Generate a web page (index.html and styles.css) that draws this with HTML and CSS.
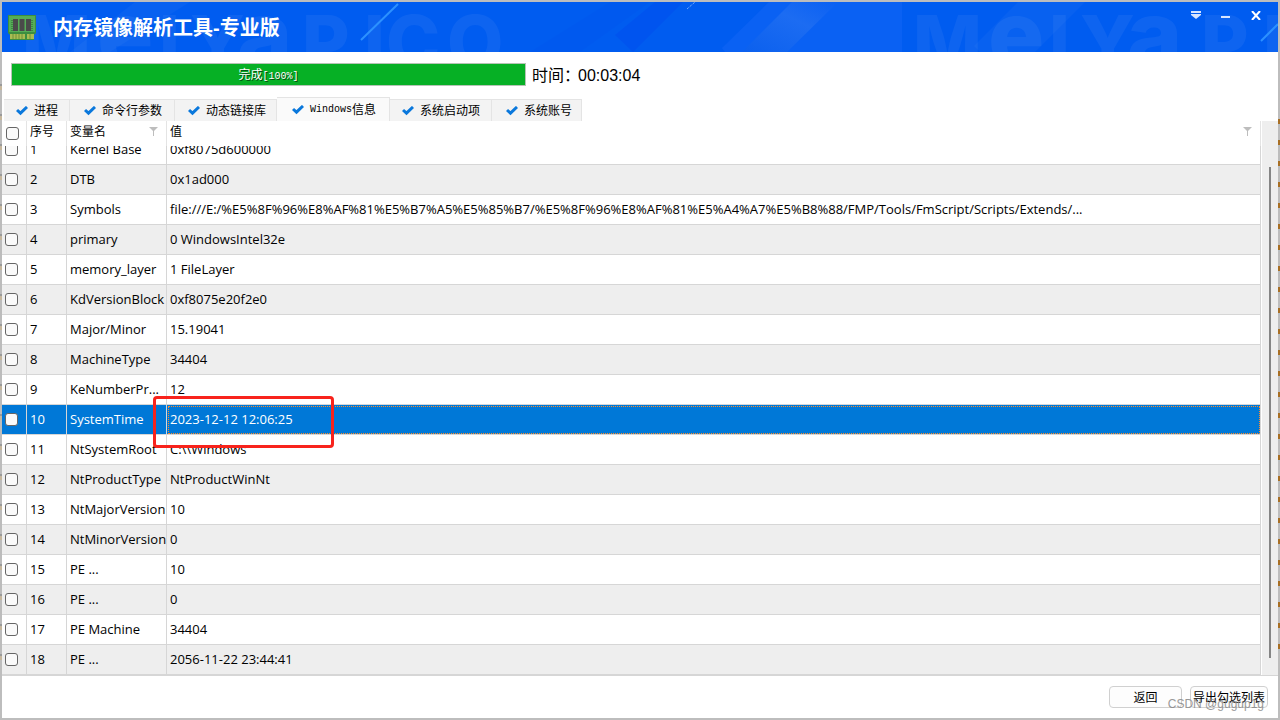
FILE: index.html
```html
<!DOCTYPE html>
<html lang="zh-CN">
<head>
<meta charset="utf-8">
<title>内存镜像解析工具-专业版</title>
<link rel="stylesheet" href="styles.css">
</head>
<body>
<svg class="symbols" aria-hidden="true">
  <symbol id="check" viewBox="0 0 12 10"><path d="M1 4 L4.500 7.200 L11 1" fill="none" stroke="#0a78dc" stroke-width="3"/></symbol>
  <symbol id="filter" viewBox="0 0 9 9"><path d="M0 0H9L5 4V9H4V4Z" fill="#bdbdbd"/></symbol>
</svg>
<div class="window">
  <header class="titlebar">
    <svg class="pattern" viewBox="2 2 1276 50" preserveAspectRatio="xMinYMin slice" aria-hidden="true">
      <defs><linearGradient id="beam" x1="0" y1="1" x2="1" y2="0"><stop offset="0" stop-color="#0b60ee"/><stop offset=".6" stop-color="#1c6cf2"/><stop offset="1" stop-color="#0a60f3"/></linearGradient></defs>
      <path d="M135 2H190L110 52H70Z" fill="#fff" opacity=".03"/>
      <path d="M545 2H650L580 52H530L610 2Z" fill="#0050ec" opacity=".2"/>
      <path d="M655 2H683L633 52L615 35Z" fill="#0048ee" opacity=".4"/>
      <path d="M769 2H902V52H725L722 48Z" fill="#0a61f3"/>
      <path d="M792 2H838L787 52H742Z" fill="url(#beam)"/>
      <path d="M1018 2H1085L1035 52H980L974 46Z" fill="#fff" opacity=".03"/>
      <text class="brand" y="68"><tspan x="22">M</tspan><tspan class="round" x="97">e</tspan><tspan x="159">I</tspan><tspan x="190">Y</tspan><tspan class="round" x="237">a</tspan><tspan x="302">P</tspan><tspan x="364">I</tspan><tspan x="386">C</tspan><tspan x="447">O</tspan></text>
      <text class="brand" y="68"><tspan x="913">M</tspan><tspan class="round" x="988">e</tspan><tspan x="1049">I</tspan><tspan x="1080">Y</tspan><tspan class="round" x="1127">a</tspan><tspan x="1201">P</tspan><tspan x="1263">I</tspan></text>
      <path d="M361 40L398 4" stroke="#2c91ff" stroke-width="2"/>
      <path d="M687 9L695 2" stroke="#9cc8ff" stroke-dasharray="1 1"/>
      <path d="M1261 41L1278 24" stroke="#2c91ff" stroke-width="2"/>
    </svg>
    <svg class="logo" viewBox="0 0 28 26" aria-hidden="true">
      <path d="M0 0H28V18L26 20V25H2V20L0 18Z" fill="#3c8f40"/>
      <path d="M1 1H27V17H1Z" fill="#55ad57"/>
      <path d="M2 19H17V24H2ZM19 19H26V24H19Z" fill="#a9bd52"/>
      <path d="M5 19V24M8 19V24M11 19V24M14 19V24M22 19V24" stroke="#71903a"/>
      <path d="M5 4H10V16H5ZM11.500 4H16.500V16H11.500ZM18 4H23V16H18Z" fill="#4a4a4a"/>
      <path d="M4 5V16M24 5V16" stroke="#2d6130" stroke-dasharray="1 1"/>
    </svg>
    <h1>内存镜像解析工具-专业版</h1>
    <div class="controls">
      <button aria-label="菜单"><svg width="10" height="9" viewBox="0 0 10 9"><path d="M0 0H10V2H0ZM0 3H10V4L5 8L0 4Z" fill="#d7e5ff"/></svg></button>
      <button aria-label="最小化"><svg width="10" height="9" viewBox="0 0 10 9"><path d="M0 5H9V7H0Z" fill="#d7e5ff"/></svg></button>
      <button aria-label="关闭"><svg width="10" height="9" viewBox="0 0 10 9"><path d="M1 0L9 9M9 0L1 9" stroke="#fff" stroke-width="2"/></svg></button>
    </div>
  </header>
  <section class="status">
    <div class="progress" role="progressbar" aria-valuenow="100">完成<span class="mono">[100%]</span></div>
    <div class="elapsed">时间：<span>00:03:04</span></div>
  </section>
  <nav class="tabs" role="tablist">
    <button role="tab"><svg><use href="#check"/></svg>进程</button>
    <button role="tab"><svg><use href="#check"/></svg>命令行参数</button>
    <button role="tab"><svg><use href="#check"/></svg>动态链接库</button>
    <button role="tab" class="active" aria-selected="true"><svg><use href="#check"/></svg><span class="mono">Windows</span>信息</button>
    <button role="tab"><svg><use href="#check"/></svg>系统启动项</button>
    <button role="tab"><svg><use href="#check"/></svg>系统账号</button>
  </nav>
  <main class="viewer">
    <table>
      <colgroup><col class="c-check"><col class="c-num"><col class="c-name"><col></colgroup>
      <thead><tr>
        <th><input type="checkbox" aria-label="全选"></th><th>序号</th>
        <th><div class="head">变量名<svg><use href="#filter"/></svg></div></th>
        <th><div class="head last">值<svg><use href="#filter"/></svg></div></th>
      </tr></thead>
      <tbody>
        <tr class="partial"><td><div><input type="checkbox" aria-label="1"></div></td><td><div>1</div></td><td><div>Kernel Base</div></td><td><div>0xf8075d600000</div></td></tr>
        <tr><td><input type="checkbox" aria-label="2"></td><td>2</td><td>DTB</td><td>0x1ad000</td></tr>
        <tr><td><input type="checkbox" aria-label="3"></td><td>3</td><td>Symbols</td><td>file:///E:/%E5%8F%96%E8%AF%81%E5%B7%A5%E5%85%B7/%E5%8F%96%E8%AF%81%E5%A4%A7%E5%B8%88/FMP/Tools/FmScript/Scripts/Extends/...</td></tr>
        <tr><td><input type="checkbox" aria-label="4"></td><td>4</td><td>primary</td><td>0 WindowsIntel32e</td></tr>
        <tr><td><input type="checkbox" aria-label="5"></td><td>5</td><td>memory_layer</td><td>1 FileLayer</td></tr>
        <tr><td><input type="checkbox" aria-label="6"></td><td>6</td><td>KdVersionBlock</td><td>0xf8075e20f2e0</td></tr>
        <tr><td><input type="checkbox" aria-label="7"></td><td>7</td><td>Major/Minor</td><td>15.19041</td></tr>
        <tr><td><input type="checkbox" aria-label="8"></td><td>8</td><td>MachineType</td><td>34404</td></tr>
        <tr><td><input type="checkbox" aria-label="9"></td><td>9</td><td>KeNumberPr...</td><td>12</td></tr>
        <tr class="selected"><td><input type="checkbox" aria-label="10"></td><td>10</td><td>SystemTime</td><td class="focus">2023-12-12 12:06:25<span class="mark"></span></td></tr>
        <tr><td><input type="checkbox" aria-label="11"></td><td>11</td><td>NtSystemRoot</td><td>C:\\Windows</td></tr>
        <tr><td><input type="checkbox" aria-label="12"></td><td>12</td><td>NtProductType</td><td>NtProductWinNt</td></tr>
        <tr><td><input type="checkbox" aria-label="13"></td><td>13</td><td>NtMajorVersion</td><td>10</td></tr>
        <tr><td><input type="checkbox" aria-label="14"></td><td>14</td><td>NtMinorVersion</td><td>0</td></tr>
        <tr><td><input type="checkbox" aria-label="15"></td><td>15</td><td>PE ...</td><td>10</td></tr>
        <tr><td><input type="checkbox" aria-label="16"></td><td>16</td><td>PE ...</td><td>0</td></tr>
        <tr><td><input type="checkbox" aria-label="17"></td><td>17</td><td>PE Machine</td><td>34404</td></tr>
        <tr><td><input type="checkbox" aria-label="18"></td><td>18</td><td>PE ...</td><td>2056-11-22 23:44:41</td></tr>
      </tbody>
    </table>
    <div class="scrollbar"><div class="thumb"></div></div>
  </main>
  <footer class="actions">
    <button>返回</button>
    <button class="export">导出勾选列表</button>
    <span class="watermark">CSDN @gugup1g</span>
  </footer>
</div>
</body>
</html>
```
FILE: styles.css
```css
* { box-sizing: border-box; }
body {
  margin: 0;
  min-height: 100vh;
  padding: 2px;
  display: flex;
  background:
    repeating-linear-gradient(#a86f24 0 5px, #b9bdc0 5px 7px, #bdbdbd 7px 21px) right 119px / 2px 540px no-repeat,
    repeating-linear-gradient(#bcbcbc 0 24px, #999 24px 26px, #c6b79d 26px 30px) left 60px / 2px 600px no-repeat,
    #bdbdbd;
  font-family: "Liberation Sans", "Noto Sans CJK SC", sans-serif;
  font-size: 12px;
  color: #000;
}
button { font: inherit; color: inherit; margin: 0; }
.symbols { position: absolute; width: 0; height: 0; }
.mono { font-family: "Liberation Mono", monospace; font-size: 10px; }
.window { flex: 1; min-width: 0; display: flex; flex-direction: column; background: #fff; }

.titlebar {
  position: relative;
  height: 50px;
  display: flex;
  align-items: center;
  padding: 0 17px 0 6px;
  background: #005cf0;
  overflow: hidden;
}
.pattern { position: absolute; inset: 0; width: 100%; height: 100%; }
.brand { font: 800 73px Inter, sans-serif; fill: #fff; fill-opacity: .055; }
.brand .round { font-size: 94px; }
.logo { position: relative; width: 28px; height: 26px; margin-top: 2px; }
h1 {
  position: relative;
  flex: 1;
  margin: 0 0 0 17px;
  padding-top: 1px;
  color: #fff;
  font: 600 20px/30px "Liberation Sans", "Noto Sans CJK SC", sans-serif;
}
.controls { position: relative; display: flex; gap: 20px; align-self: flex-start; padding-top: 9px; }
.controls button { display: flex; padding: 0; border: 0; background: none; }

.status { display: flex; align-items: center; gap: 6px; height: 45px; padding: 0 9px; }
.progress {
  width: 515px;
  height: 23px;
  border: 1px solid #b5c4b5;
  background: #06b025;
  color: #fff;
  text-align: center;
  line-height: 22px;
  text-shadow: 1px 1px 0 #034a10;
}
.elapsed { display: flex; font-size: 16px; line-height: 22px; padding-top: 2px; }
.elapsed span { margin-left: -2px; }

.tabs { display: flex; align-items: flex-end; height: 24px; padding-left: 2px; }
.tabs button {
  display: flex;
  align-items: center;
  height: 22px;
  padding: 0 11px 0 12px;
  border: 1px solid #e4e4e4;
  border-width: 1px 1px 0 0;
  background: #f3f3f3;
  line-height: 18px;
  white-space: nowrap;
}
.tabs button:nth-child(2) { padding: 0 12px 0 14px; }
.tabs button:nth-child(3) { padding: 0 10px 0 13px; }
.tabs button:nth-child(n+5) { padding: 0 11px 0 12px; }
.tabs button:nth-child(6) { padding: 0 9px 0 14px; }
.tabs button.active { height: 24px; padding: 0 13px 0 15px; background: #fafafa; }
.tabs svg { width: 12px; height: 10px; margin-right: 6px; }

.viewer { display: flex; }
table { flex: 1; width: 100%; table-layout: fixed; border-collapse: separate; border-spacing: 0; }
.c-check { width: 25px; }
.c-num { width: 40px; }
.c-name { width: 100px; }
th, td { padding: 0 3px; border-right: 1px solid #d6d6d6; text-align: left; white-space: nowrap; }
th { height: 25px; padding-bottom: 4px; font-weight: 400; line-height: 20px; border-color: #e4e4e4; }
th:nth-child(n+2) { padding-right: 4px; }
td { height: 30px; padding-bottom: 1px; border-bottom: 1px solid #d6d6d6; font: 13px/28px "Open Sans", sans-serif; }
th:first-child { padding: 0 0 0 4px; }
tbody tr:nth-child(even) { background: #eee; }
tbody .partial td { height: 19px; }
.partial div { display: flex; align-items: flex-end; height: 17px; overflow: hidden; }
.head { display: flex; justify-content: space-between; align-items: center; }
.head svg { width: 9px; height: 9px; margin-right: 4px; }
input[type="checkbox"] {
  appearance: none;
  display: block;
  flex: none;
  width: 13px;
  height: 13px;
  margin: 0;
  border: 1px solid #666;
  border-radius: 3px;
  background: #fafafa;
}
.partial td input[type="checkbox"] { margin-bottom: 7px; }
tbody tr.selected { background: #0078d7; color: #fff; }
.focus { position: relative; outline: 1px dotted #ff8c28; outline-offset: -2px; }
.mark {
  position: absolute;
  left: -14px;
  top: -9px;
  width: 181px;
  height: 52px;
  border: 3px solid #f8231c;
  border-radius: 4px;
}
.scrollbar { width: 17px; border-left: 1px solid #fff; background: #eee; padding: 46px 7px 17px; }
.thumb { height: 100%; width: 2px; background: #858585; }

.actions {
  position: relative;
  flex: 1;
  display: flex;
  justify-content: flex-end;
  align-items: flex-start;
  gap: 8px;
  padding: 10px 10px 0;
  border-top: 1px solid #d6d6d6;
}
.actions button {
  width: 73px;
  height: 22px;
  padding: 1px 0 0;
  border: 1px solid #d0d0d0;
  border-radius: 4px;
  background: #fdfdfd;
  line-height: 20px;
}
.actions .export { width: 78px; }
.watermark { position: absolute; right: 14px; bottom: 6px; color: #888; font-size: 12px; line-height: 16px; opacity: .85; }
```
